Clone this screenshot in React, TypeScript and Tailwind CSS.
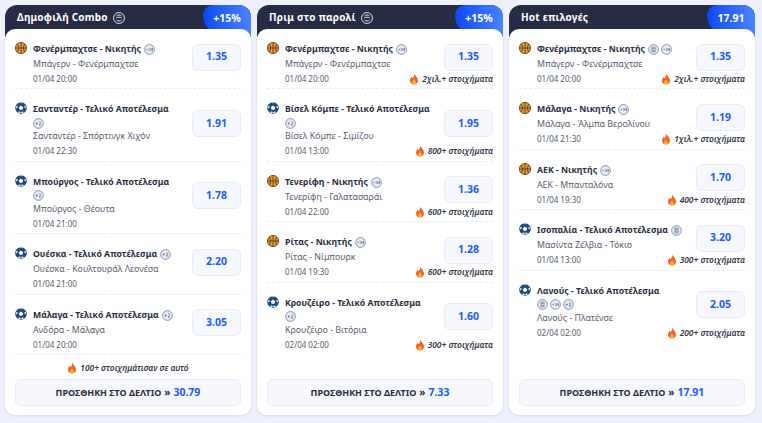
import React from "react";

const Ball = () => (
  <svg width="12" height="12" viewBox="0 0 12 12" className="shrink-0">
    <circle cx="6" cy="6" r="5.6" fill="#e99a2a" stroke="#4a3a22" strokeWidth="0.8" />
    <path d="M0.6 6H11.4M6 .5V11.5M2.2 2.2C4 4 4 8 2.2 9.8M9.8 2.2C8 4 8 8 9.8 9.8" fill="none" stroke="#4a3a22" strokeWidth="0.8" />
  </svg>
);
const Soccer = () => (
  <svg width="12" height="12" viewBox="0 0 12 12" className="shrink-0">
    <circle cx="6" cy="6" r="5.8" fill="#1b4a80" />
    <path d="M6 3.6 8.2 5.2 7.4 7.8H4.6L3.8 5.2Z" fill="#fff" />
    <path d="M5 .6h2L6 1.6ZM.8 5l1.4-1.6.4 1.8-.8 1.4ZM11.2 5 9.8 3.4 9.4 5.2l.8 1.4ZM3 10l1.8-.6L6 10.2 4.6 11.2ZM9 10l-1.8-.6L6 10.2l1.4 1Z" fill="#fff" />
  </svg>
);
const Flame = ({ s = 10 }: { s?: number }) => (
  <svg width={s} height={s + 2} viewBox="0 0 12 14" className="shrink-0">
    <path d="M6.4.4C7 3 10.8 5 10.8 9 10.8 11.8 8.6 13.6 6 13.6S1.2 11.8 1.2 9C1.2 6.8 2.6 5.6 3.2 4.2 3.8 5 4 5.8 4.4 6 5.4 4.6 6.6 3 6.4.4Z" fill="#f0642a" />
    <path d="M6 7C6.4 8.6 8.2 9.4 8.2 11.2 8.2 12.6 7.2 13.6 6 13.6S3.8 12.6 3.8 11.2C3.8 9.6 5.4 8.8 6 7Z" fill="#fbb62e" />
  </svg>
);
type Kind = "h" | "s" | "l";
const Chip = ({ k }: { k: Kind }) => (
  <svg width="11" height="11" viewBox="0 0 11 11" className="shrink-0">
    <circle cx="5.5" cy="5.5" r="4.9" fill="#e6eaf3" stroke="#7382a0" strokeWidth="0.8" />
    {k === "h" && <path d="M2.4 5.5h1.6M5 4.2l1 1.3-1 1.3M7 4v3M8.5 4v3" stroke="#66758f" strokeWidth="0.8" fill="none" />}
    {k === "s" && <path d="M2.6 5.5h2.2M3.7 4.4v2.2M6 4.2c1-.6 2.2.2 1.6 1.2L6 7h2.2" stroke="#66758f" strokeWidth="0.8" fill="none" />}
    {k === "l" && <path d="M3.4 3.2h4.2M3.2 4.7h4.6M3.2 6.3h4.6M3.4 7.8h4.2" stroke="#66758f" strokeWidth="0.8" fill="none" />}
  </svg>
);
const Logo = () => (
  <svg width="12" height="12" viewBox="0 0 13 13" className="shrink-0">
    <circle cx="6.5" cy="6.5" r="5.9" fill="none" stroke="#fff" strokeWidth="0.9" />
    <path d="M3.8 4.2C5 3 8 3 9.2 4.2M3.4 6.5C5 5.3 8 5.3 9.6 6.5M3.8 8.8C5 10 8 10 9.2 8.8" fill="none" stroke="#fff" strokeWidth="0.9" />
  </svg>
);

type Row = { t: string; sp: "b" | "s"; c: Kind[]; w?: boolean; m: string; d: string; o: string; hot?: string };

const col1: Row[] = [
  { t: "Φενέρμπαχτσε - Νικητής", sp: "b", c: ["h"], m: "Μπάγερν - Φενέρμπαχτσε", d: "01/04 20:00", o: "1.35" },
  { t: "Σανταντέρ - Τελικό Αποτέλεσμα", sp: "s", c: ["s"], w: true, m: "Σανταντέρ - Σπόρτινγκ Χιχόν", d: "01/04 22:30", o: "1.91" },
  { t: "Μπούργος - Τελικό Αποτέλεσμα", sp: "s", c: ["s"], w: true, m: "Μπούργος - Θέουτα", d: "01/04 21:00", o: "1.78" },
  { t: "Ουέσκα - Τελικό Αποτέλεσμα", sp: "s", c: ["s"], m: "Ουέσκα - Κουλτουράλ Λεονέσα", d: "01/04 21:00", o: "2.20" },
  { t: "Μάλαγα - Τελικό Αποτέλεσμα", sp: "s", c: ["s"], m: "Ανδόρα - Μάλαγα", d: "01/04 20:00", o: "3.05" },
];
const col2: Row[] = [
  { t: "Φενέρμπαχτσε - Νικητής", sp: "b", c: ["h"], m: "Μπάγερν - Φενέρμπαχτσε", d: "01/04 20:00", o: "1.35", hot: "2χιλ.+ στοιχήματα" },
  { t: "Βίσελ Κόμπε - Τελικό Αποτέλεσμα", sp: "s", c: ["s"], w: true, m: "Βίσελ Κόμπε - Σιμίζου", d: "01/04 13:00", o: "1.95", hot: "800+ στοιχήματα" },
  { t: "Τενερίφη - Νικητής", sp: "b", c: ["h"], m: "Τενερίφη - Γαλατασαράι", d: "01/04 22:00", o: "1.36", hot: "600+ στοιχήματα" },
  { t: "Ρίτας - Νικητής", sp: "b", c: ["h"], m: "Ρίτας - Νίμπουρκ", d: "01/04 19:30", o: "1.28", hot: "600+ στοιχήματα" },
  { t: "Κρουζέιρο - Τελικό Αποτέλεσμα", sp: "s", c: ["s"], w: true, m: "Κρουζέιρο - Βιτόρια", d: "02/04 02:00", o: "1.60", hot: "300+ στοιχήματα" },
];
const col3: Row[] = [
  { t: "Φενέρμπαχτσε - Νικητής", sp: "b", c: ["l", "h"], m: "Μπάγερν - Φενέρμπαχτσε", d: "01/04 20:00", o: "1.35", hot: "2χιλ.+ στοιχήματα" },
  { t: "Μάλαγα - Νικητής", sp: "b", c: ["h"], m: "Μάλαγα - Άλμπα Βερολίνου", d: "01/04 21:30", o: "1.19", hot: "1χιλ.+ στοιχήματα" },
  { t: "ΑΕΚ - Νικητής", sp: "b", c: ["h"], m: "ΑΕΚ - Μπανταλόνα", d: "01/04 19:30", o: "1.70", hot: "400+ στοιχήματα" },
  { t: "Ισοπαλία - Τελικό Αποτέλεσμα", sp: "s", c: ["l"], m: "Μασίντα Ζέλβια - Τόκιο", d: "01/04 13:00", o: "3.20", hot: "300+ στοιχήματα" },
  { t: "Λανούς - Τελικό Αποτέλεσμα", sp: "s", c: ["l", "h", "s"], w: true, m: "Λανούς - Πλατένσε", d: "02/04 02:00", o: "2.05", hot: "200+ στοιχήματα" },
];

const Hot = ({ children }: { children: React.ReactNode }) => (
  <span className="flex h-[14px] items-center gap-[3px] text-[8.4px] leading-[14px] font-semibold italic text-[#333a4a]">
    <Flame />
    {children}
  </span>
);

const RowView = ({ r, last }: { r: Row; last: boolean }) => (
  <div className={`pt-[13px] pb-[2.4px] ${last ? "" : "border-b border-dashed border-[#e8ebf5]"}`}>
    <div className="flex items-center justify-between">
      <div className="flex w-[178px] gap-[6px]">
        <div>{r.sp === "b" ? <Ball /> : <Soccer />}</div>
        <div className="w-[152px]">
          <div className="flex flex-wrap items-center gap-x-[3px] text-[8.7px] leading-[15px] font-bold text-[#2a2f3f]">
            <span>{r.t}</span>
            <span className={`flex h-[12px] items-center gap-[2px] ${r.w ? "w-full" : ""}`}>
              {r.c.map((k, i) => (
                <Chip key={i} k={k} />
              ))}
            </span>
          </div>
          <div className="text-[8.8px] leading-[15px] text-[#5a6172]">{r.m}</div>
        </div>
      </div>
      <div className="flex h-[27px] w-[49px] items-center justify-center rounded-md border border-[#e6ebf8] bg-[#f6f8fe] text-[10.5px] font-bold text-[#1a5cff]">
        {r.o}
      </div>
    </div>
    <div className="flex h-[14px] items-center justify-between pl-[18px] text-[8px] leading-[14px] text-[#555c6c]">
      <span>{r.d}</span>
      {r.hot && <Hot>{r.hot}</Hot>}
    </div>
  </div>
);

const Card = ({ title, badge, logo, rows, total, foot }: { title: string; badge: string; logo: boolean; rows: Row[]; total: string; foot?: string }) => (
  <div className="flex w-[246px] flex-col">
    <div className="relative h-[32px] overflow-hidden rounded-t-xl bg-[#262c44]">
      <div className="flex h-[25px] items-center gap-[5px] pl-3 text-[10px] font-bold tracking-[0.2px] text-white">
        {title}
        {logo && <Logo />}
      </div>
      <div className="absolute top-0 right-0 flex h-full w-[48px] justify-center rounded-tl-[10px] rounded-bl-[22px] bg-gradient-to-r from-[#0c47f2] to-[#4a82ff] pt-[6px] text-[10.5px] leading-[14px] font-bold text-white">
        {badge}
      </div>
    </div>
    <div className="relative -mt-[8px] flex h-[386px] flex-col rounded-[10px] bg-white px-[10px] pb-[9px] shadow-[0_1px_3px_rgba(60,80,150,0.14)]">
      {rows.map((r, i) => (
        <RowView key={i} r={r} last={!foot && i === rows.length - 1} />
      ))}
      {foot && (
        <div className="flex items-center justify-center pt-[6px]">
          <Hot>{foot}</Hot>
        </div>
      )}
      <div className="mt-auto flex h-[27px] items-center justify-center gap-[3px] rounded-md border border-[#e6ebf8] bg-[#f6f8fe] text-[9px] font-bold text-[#2a2f3f]">
        ΠΡΟΣΘΗΚΗ ΣΤΟ ΔΕΛΤΙΟ <span className="text-[10px]">»</span>
        <span className="text-[10.5px] text-[#1a5cff]">{total}</span>
      </div>
    </div>
  </div>
);

export default function App() {
  return (
    <div className="flex h-[423px] w-[762px] gap-[6px] overflow-hidden bg-[#eef1fb] pt-[5px] pl-[5px] font-['Noto_Sans',sans-serif]">
      <Card title="Δημοφιλή Combo" badge="+15%" logo rows={col1} total="30.79" foot="100+ στοιχημάτισαν σε αυτό" />
      <Card title="Πριμ στο παρολί" badge="+15%" logo rows={col2} total="7.33" />
      <Card title="Hot επιλογές" badge="17.91" logo={false} rows={col3} total="17.91" />
    </div>
  );
}
